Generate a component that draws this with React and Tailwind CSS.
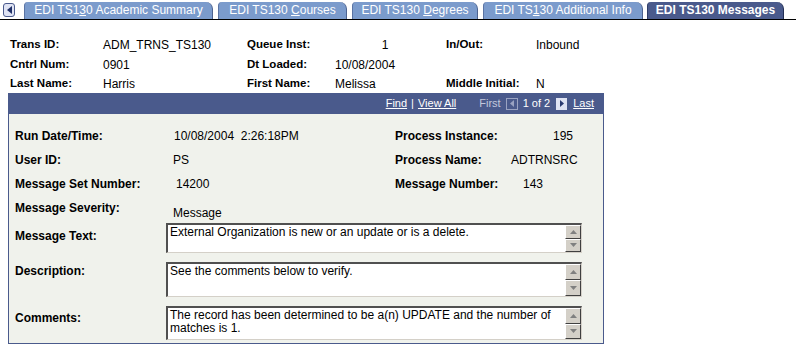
import React from "react";

const font = "font-['Liberation_Sans',Arial,sans-serif]";

function Tri({ dir, color, w = 6, h = 8 }) {
  const pts =
    dir === "left" ? `${w},0 ${w},${h} 0,${h / 2}` :
    dir === "right" ? `0,0 0,${h} ${w},${h / 2}` :
    dir === "up" ? `0,${h} ${w},${h} ${w / 2},0` :
    `0,0 ${w},0 ${w / 2},${h}`;
  return (
    <svg width={w} height={h} viewBox={`0 0 ${w} ${h}`}>
      <polygon points={pts} fill={color} />
    </svg>
  );
}

function Tab({ w, active, children, ml = "ml-[5px]" }) {
  return (
    <div
      className={`${w} ${ml} h-[17px] flex items-center justify-center text-[12px] leading-[17px] whitespace-nowrap text-white rounded-tl-[4px] rounded-tr-[7px] border-l border-r ${
        active
          ? "bg-[#4a5a8c] border-l-[#2f3d68] border-r-[#232f55] font-bold"
          : "bg-[#7b9bcc] border-l-[#5a73a3] border-r-[#4d6390]"
      }`}
    >
      <span>{children}</span>
    </div>
  );
}

function ScrollBtn({ dir }) {
  return (
    <div className="flex-1 flex items-center justify-center bg-[#d4d0c8] border border-t-white border-l-white border-r-[#404040] border-b-[#404040]">
      <Tri dir={dir} color="#808080" w={7} h={4} />
    </div>
  );
}

function TextBox({ h, children }) {
  return (
    <div className={`${h} w-[416px] flex bg-white border-t-2 border-l-2 border-r border-b border-t-[#505050] border-l-[#505050] border-r-[#d4d0c8] border-b-[#d4d0c8]`}>
      <div className="flex-1 pl-[2px] pt-[1px] text-[12px] leading-[13px] text-black">{children}</div>
      <div className="w-[16px] flex flex-col">
        <ScrollBtn dir="up" />
        <ScrollBtn dir="down" />
      </div>
    </div>
  );
}

function HeadRow({ cells, h = "h-[20px]" }) {
  const widths = ["w-[93px]", "w-[144px]", "w-[88px]", "w-[111px]", "w-[90px]", "w-[120px]"];
  return (
    <div className={`flex items-center ${h} pl-[10px]`}>
      {cells.map((c, i) => (
        <div
          key={i}
          className={`${widths[i]} ${i % 2 === 0 ? "font-bold text-[11.5px]" : "text-[12px]"} whitespace-pre`}
        >
          {c}
        </div>
      ))}
    </div>
  );
}

function BodyRow({ label, value, rlabel, rvalue, valueCls = "", rvalueCls = "" }) {
  return (
    <div className="flex items-center h-[24px] pl-[6px]">
      <div className="w-[157px] font-bold text-[12px]">{label}</div>
      <div className={`w-[223px] text-[12px] whitespace-pre ${valueCls}`}>{value}</div>
      <div className="w-[116px] font-bold text-[12px]">{rlabel}</div>
      <div className={`text-[12px] ${rvalueCls}`}>{rvalue}</div>
    </div>
  );
}

export default function App() {
  return (
    <div className={`w-[796px] h-[355px] bg-white text-black overflow-hidden ${font}`}>
      {/* tab strip */}
      <div className="h-[20px] border-b border-black flex items-start pt-[2px] pl-[3px]">
        <div className="w-[12px] h-[14px] mt-[1px] rounded-[3px] border border-[#4a5a8c] bg-[#dfe3f3] flex items-center justify-center">
          <Tri dir="left" color="#1f2f66" w={5} h={8} />
        </div>
        <Tab w="w-[189px]" ml="ml-[9px]">
          EDI TS1<u>3</u>0 Academic Summary
        </Tab>
        <Tab w="w-[129px]">
          EDI TS130{" "}<u>C</u>ourses
        </Tab>
        <Tab w="w-[126px]">
          EDI TS130{" "}<u>D</u>egrees
        </Tab>
        <Tab w="w-[160px]">
          EDI TS<u>1</u>30 Additional Info
        </Tab>
        <Tab w="w-[137px]" ml="ml-[4px]" active>
          EDI TS130 Messages
        </Tab>
      </div>

      {/* key fields */}
      <div className="pt-[15px]">
        <HeadRow cells={["Trans ID:", "ADM_TRNS_TS130", "Queue Inst:", "              1", "In/Out:", "Inbound"]} />
        <HeadRow cells={["Cntrl Num:", "0901", "Dt Loaded:", "10/08/2004", "", ""]} />
        <HeadRow h="h-[18px]" cells={["Last Name:", "Harris", "First Name:", "Melissa", "Middle Initial:", "N"]} />
      </div>

      {/* message panel */}
      <div className="ml-[8px] w-[596px] border-x border-b border-[#4a5a8c]">
        <div className="h-[21px] bg-[#4a5a8c] flex items-center justify-end pr-[9px] text-[11px] text-white">
          <span className="underline">Find</span>
          <span className="mx-[4px]">|</span>
          <span className="underline">View All</span>
          <span className="ml-[23px] text-[#c2c8dc]">First</span>
          <div className="ml-[5px] w-[12px] h-[12px] border border-[#9aa3c2] flex items-center justify-center">
            <Tri dir="left" color="#9aa3c2" w={4} h={7} />
          </div>
          <span className="ml-[5px]">1 of 2</span>
          <div className="ml-[6px] w-[11px] h-[12px] bg-[#dfe3f3] flex items-center justify-center">
            <Tri dir="right" color="#2a3a70" w={4} h={7} />
          </div>
          <span className="ml-[6px] underline">Last</span>
        </div>

        <div className="bg-[#f0f2ec] pt-[10px] pb-[3px]">
          <BodyRow
            label="Run Date/Time:"
            value={"10/08/2004  2:26:18PM"}
            valueCls="pl-[2px]"
            rlabel="Process Instance:"
            rvalue="195"
            rvalueCls="w-[62px] text-right"
          />
          <BodyRow label="User ID:" value="PS" valueCls="pl-[1px]" rlabel="Process Name:" rvalue="ADTRNSRC" />
          <BodyRow
            label="Message Set Number:"
            value="14200"
            valueCls="pl-[4px]"
            rlabel="Message Number:"
            rvalue="143"
            rvalueCls="pl-[12px]"
          />
          <BodyRow label="Message Severity:" value="Message" valueCls="pl-[1px] mt-[10px]" rlabel="" rvalue="" />

          <div className="flex mt-[3px] pl-[6px]">
            <div className="w-[151px] pt-[6px] font-bold text-[12px] leading-[14px]">Message Text:</div>
            <TextBox h="h-[30px]">External Organization is new or an update or is a delete.</TextBox>
          </div>
          <div className="flex mt-[9px] pl-[6px]">
            <div className="w-[151px] pt-[2px] font-bold text-[12px] leading-[14px]">Description:</div>
            <TextBox h="h-[35px]">See the comments below to verify.</TextBox>
          </div>
          <div className="flex mt-[9px] pl-[6px]">
            <div className="w-[151px] pt-[5px] font-bold text-[12px] leading-[14px]">Comments:</div>
            <TextBox h="h-[34px]">
              <div className="whitespace-nowrap">The record has been determined to be a(n) UPDATE and the number of</div>
              <div>matches is 1.</div>
            </TextBox>
          </div>
        </div>
      </div>
    </div>
  );
}
